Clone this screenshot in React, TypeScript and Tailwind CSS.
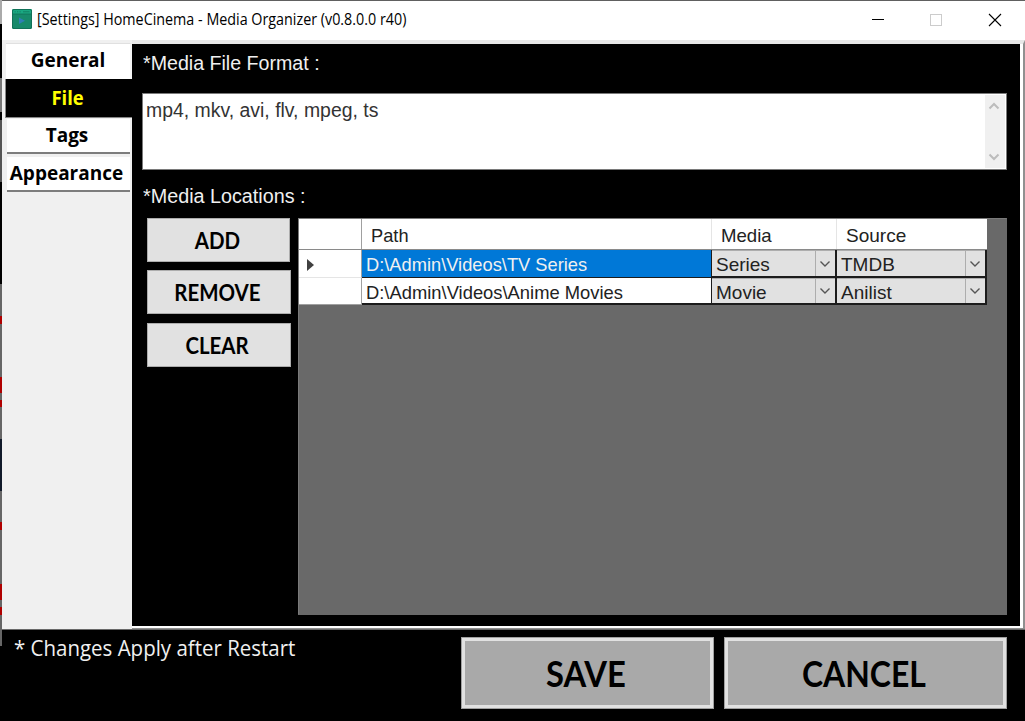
import React from "react";

const liberation = "font-['Liberation_Sans',Arial,sans-serif]";
const openSans = "font-['Open_Sans',sans-serif]";
const lato = "font-['Lato',sans-serif]";

function Chevron({ up = false, className = "" }: { up?: boolean; className?: string }) {
  return (
    <svg viewBox="0 0 12 8" className={`h-2 w-3 shrink-0 ${className}`} fill="none" stroke="currentColor">
      <path d={up ? "M1.5 6.5 6 2l4.5 4.5" : "M1.5 1.5 6 6l4.5-4.5"} />
    </svg>
  );
}

function AppIcon() {
  return (
    <svg viewBox="0 0 20 20" className="mb-[3px] h-5 w-5 shrink-0">
      <rect width="20" height="20" rx="1.5" fill="#178a6b" />
      <path d="M1.5 0h17A1.5 1.5 0 0 1 20 1.5V5H0V1.5A1.5 1.5 0 0 1 1.5 0Z" fill="#1aa882" />
      <path d="M0 5h20" stroke="#0f6f57" strokeWidth=".8" />
      <path d="M2.5 2.8h1.2M5 2.8h1.2M7.5 2.8h1.2M11 2.8h6.5" stroke="#137c60" strokeWidth=".9" />
      <path d="M7 8.500v6.500l6-3.200z" fill="#2f7fb4" />
      <rect x=".5" y=".5" width="19" height="19" rx="1.5" fill="none" stroke="#117158" />
    </svg>
  );
}

function TitleBar() {
  return (
    <header className="flex h-[39px] shrink-0 items-center bg-white pl-[10px]">
      <AppIcon />
      <h1 className={`mb-[3px] ml-[5px] w-[420px] whitespace-nowrap text-base leading-5 text-black ${openSans}`}>
        <span className="inline-block origin-left scale-x-[.895]">[Settings] HomeCinema - Media Organizer (v0.8.0.0 r40)</span>
      </h1>
      <svg viewBox="0 0 160 39" className="ml-auto h-[39px] w-[160px]" fill="none">
        <path d="M7 18.5h12" stroke="#000" />
        <rect x="65.5" y="13.5" width="11" height="11" stroke="#ccc" />
        <path d="m124 13 12 12m0-12-12 12" stroke="#000" strokeWidth="1.1" />
      </svg>
    </header>
  );
}

function Tabs() {
  return (
    <nav className={`flex w-[130px] shrink-0 flex-col bg-[#f0f0f0] pt-[3px] text-[19px] font-bold text-black ${openSans}`}>
      <button className="ml-1 flex h-9 w-[126px] items-center justify-center border-r-2 border-t border-r-[#f4f4f4] border-t-[#e0e0e0] bg-white pb-[3px]">
        General
      </button>
      <button className="ml-[3px] flex h-[39px] items-center justify-center border-b border-l border-[#888] bg-black pr-[3px] text-[#ffff00]">
        <span className="inline-block scale-x-[.97]">File</span>
      </button>
      <button className="ml-[5px] mt-px flex h-[35px] w-[123px] items-center justify-center border-b-2 border-[#7d7d7d] bg-white pr-[3px]">
        Tags
      </button>
      <button className="ml-[5px] mt-[3px] flex h-[35px] w-[123px] items-center justify-center border-b-2 border-[#7d7d7d] bg-white pb-px pr-1">
        Appearance
      </button>
    </nav>
  );
}

function SmallButton({ label, className = "w-36" }: { label: string; className?: string }) {
  return (
    <button
      className={`flex h-11 items-center justify-center border border-[#adadad] bg-[#e1e1e1] pr-[3px] text-[22px] font-bold text-black ${lato} ${className}`}
    >
      <span className="inline-block scale-x-[.93]">{label}</span>
    </button>
  );
}

function Combo({ value, className }: { value: string; className: string }) {
  return (
    <div className={`flex h-full border-b-2 border-r-2 border-[#1c1c1c] bg-[#e1e1e1] ${className}`}>
      <span className="flex-1 border-r border-t border-[#adadad] pl-1 leading-[27px]">{value}</span>
      <span className="flex w-[19px] items-center justify-center border-t border-[#adadad] text-[#555]">
        <Chevron className="mr-0.5 [stroke-width:1.4]" />
      </span>
    </div>
  );
}

function LocationsGrid() {
  return (
    <section className={`h-[397px] w-[709px] border border-[#7a7a7a] border-b-[#696969] border-r-[#696969] bg-[#696969] text-[19px] text-[#222] ${liberation}`}>
      <div className="flex h-[31px] w-[688px] border-b border-[#8a8a8a] bg-white leading-[33px]">
        <span className="w-[63px] border-r border-[#a0a0a0]" />
        <span className="w-[350px] border-r border-[#e5e5e5] pl-[9px]">
          <span className="inline-block origin-left scale-x-[.96]">Path</span>
        </span>
        <span className="w-[125px] border-r border-[#e5e5e5] pl-[9px]">
          <span className="inline-block origin-left scale-x-[.98]">Media</span>
        </span>
        <span className="pl-[9px]">Source</span>
      </div>
      <div className="flex h-[28px] w-[688px]">
        <span className="flex w-[63px] items-center border-b border-r border-b-[#e5e5e5] border-r-[#a0a0a0] bg-white pl-2">
          <svg viewBox="0 0 7 12" className="mt-0.5 h-3 w-[7px]"><path d="M0 0v12l7-6z" fill="#404040" /></svg>
        </span>
        <span className="w-[350px] border-b border-r border-[#1c1c1c] bg-[#0078d7] pl-1 leading-[30px] text-[#f0f0f0]">
          <span className="inline-block origin-left scale-x-[.962]">D:\Admin\Videos\TV Series</span>
        </span>
        <Combo value="Series" className="w-[125px]" />
        <Combo value="TMDB" className="w-[150px]" />
      </div>
      <div className="flex h-[27px] w-[688px]">
        <span className="w-[63px] border-b border-r border-[#a0a0a0] bg-white" />
        <span className="w-[350px] border-b-2 border-r border-[#1c1c1c] bg-white pl-1 leading-[29px]">
          <span className="inline-block origin-left scale-x-[.967]">D:\Admin\Videos\Anime Movies</span>
        </span>
        <Combo value="Movie" className="w-[125px]" />
        <Combo value="Anilist" className="w-[150px]" />
      </div>
    </section>
  );
}

function FilePanel() {
  return (
    <main className="flex h-[582px] w-[888px] flex-col bg-black pl-[10px]">
      <h2 className={`h-[49px] pl-px pt-[5px] text-xl leading-7 text-[#f0f0f0] ${liberation}`}>
        <span className="inline-block origin-left scale-x-[.981]">*Media File Format :</span>
      </h2>
      <div className="flex h-[77px] w-[865px] border border-[#7a7a7a] bg-white p-px">
        <div className={`flex-1 pl-[2px] pt-px text-xl leading-7 text-[#333] ${liberation}`}>
          <span className="inline-block origin-left scale-x-[.971]">mp4, mkv, avi, flv, mpeg, ts</span>
        </div>
        <div className="flex w-5 flex-col items-center justify-between bg-[#f0f0f0] py-[7px] pr-0.5 text-[#bcbcbc]">
          <Chevron up className="[stroke-width:2]" />
          <Chevron className="[stroke-width:2]" />
        </div>
      </div>
      <h2 className={`h-12 pl-px pt-3 text-xl leading-7 text-[#f0f0f0] ${liberation}`}>
        <span className="inline-block origin-left scale-x-[.988]">*Media Locations :</span>
      </h2>
      <div className="flex">
        <div className="flex w-[156px] flex-col pl-[5px]">
          <SmallButton label="ADD" className="w-[143px]" />
          <SmallButton label="REMOVE" className="mt-2 w-36" />
          <SmallButton label="CLEAR" className="mt-[9px] w-36" />
        </div>
        <LocationsGrid />
      </div>
    </main>
  );
}

function FooterButton({ label, className, labelClassName }: { label: string; className: string; labelClassName: string }) {
  return (
    <button className={`h-[72px] border border-[#a0a0a0] bg-[#e1e1e1] p-[3px] ${className}`}>
      <span className={`flex h-full items-center justify-center bg-[#a9a9a9] pr-1 text-[36px] font-bold text-black ${lato}`}>
        <span className={`inline-block ${labelClassName}`}>{label}</span>
      </span>
    </button>
  );
}

// Slivers of the window behind, seen along the left edge.
function BackgroundEdge() {
  return (
    <aside className="flex w-0.5 shrink-0 flex-col">
      <i className="h-6 bg-[#aaa]" />
      <i className="h-[54px] bg-black" />
      <i className="h-[34px] bg-[#777]" />
      <i className="h-2 bg-black" />
      <i className="h-[62px] bg-[#555]" />
      <i className="h-[102px] bg-black" />
      <i className="h-8 bg-[#666]" />
      <i className="h-2 bg-[#b00000]" />
      <i className="h-[53px] bg-[#666]" />
      <i className="h-4 bg-[#b00000]" />
      <i className="h-[7px] bg-[#666]" />
      <i className="h-[7px] bg-[#b00000]" />
      <i className="h-8 bg-[#666]" />
      <i className="h-[52px] bg-[#111a2a]" />
      <i className="h-[31px] bg-[#666]" />
      <i className="h-2 bg-[#b00000]" />
      <i className="h-[54px] bg-[#666]" />
      <i className="h-4 bg-[#b00000]" />
      <i className="h-[7px] bg-[#666]" />
      <i className="h-2 bg-[#b00000]" />
      <i className="h-[31px] bg-[#666]" />
      <i className="flex-1 bg-black" />
    </aside>
  );
}

export default function App() {
  return (
    <div className="flex h-[721px] w-[1025px] overflow-hidden bg-black">
      <BackgroundEdge />
      <div className="flex w-[1023px] flex-col border-t border-[#606060]">
        <TitleBar />
        <div className="flex h-[590px] shrink-0 border-b border-[#696969] bg-[#f0f0f0]">
          <Tabs />
          <div className="w-[893px] border-b border-r-2 border-t-4 border-[#909090] border-t-[#e8e8e8] bg-white">
            <FilePanel />
          </div>
        </div>
        <footer className="flex h-[91px] bg-black pl-3 pt-[7px]">
          <p className={`-mt-px w-[447px] whitespace-nowrap text-[21px] leading-6 text-[#f0f0f0] ${openSans}`}>
            <span className="inline-block origin-left scale-x-[.975]">* Changes Apply after Restart</span>
          </p>
          <FooterButton label="SAVE" className="w-[253px]" labelClassName="scale-x-[.91]" />
          <FooterButton label="CANCEL" className="ml-[10px] w-[283px]" labelClassName="scale-x-[.887]" />
        </footer>
      </div>
    </div>
  );
}
